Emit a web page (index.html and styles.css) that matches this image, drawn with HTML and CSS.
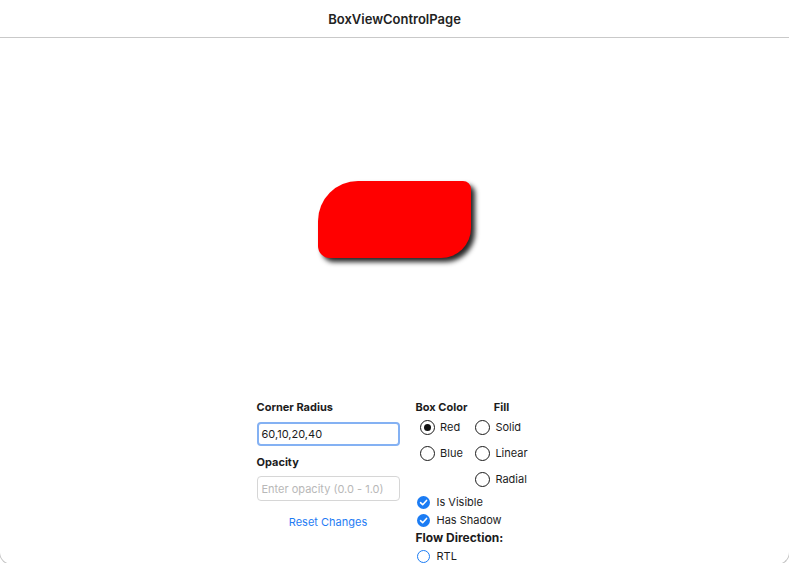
FILE: index.html
```html
<!DOCTYPE html>
<html lang="en">
<head>
<meta charset="utf-8">
<title>BoxViewControlPage</title>
<link rel="stylesheet" href="styles.css">
</head>
<body>
<div class="window">
  <header class="header">BoxViewControlPage</header>
  <main class="stage">
    <div class="box"></div>
  </main>
  <section class="controls">
    <div class="col-left">
      <div class="label">Corner Radius</div>
      <div class="entry focused">60,10,20,40</div>
      <div class="label label-gap">Opacity</div>
      <div class="entry placeholder">Enter opacity (0.0 - 1.0)</div>
      <div class="link">Reset Changes</div>
    </div>
    <div class="col-right">
      <div class="groups">
        <div class="group group-color">
          <div class="label">Box Color</div>
          <div class="radios">
            <div class="radio-row"><span class="radio checked"></span><span>Red</span></div>
            <div class="radio-row"><span class="radio"></span><span>Blue</span></div>
          </div>
        </div>
        <div class="group">
          <div class="label">Fill</div>
          <div class="radios">
            <div class="radio-row"><span class="radio"></span><span>Solid</span></div>
            <div class="radio-row"><span class="radio"></span><span>Linear</span></div>
            <div class="radio-row"><span class="radio"></span><span>Radial</span></div>
          </div>
        </div>
      </div>
      <div class="check-row">
        <span class="check"><svg viewBox="0 0 14 14" width="14" height="14"><path d="M3.8 7.2 L6.1 9.4 L10.3 4.8" fill="none" stroke="#fff" stroke-width="1.7" stroke-linecap="round" stroke-linejoin="round"/></svg></span>
        <span>Is Visible</span>
      </div>
      <div class="check-row">
        <span class="check"><svg viewBox="0 0 14 14" width="14" height="14"><path d="M3.8 7.2 L6.1 9.4 L10.3 4.8" fill="none" stroke="#fff" stroke-width="1.7" stroke-linecap="round" stroke-linejoin="round"/></svg></span>
        <span>Has Shadow</span>
      </div>
      <div class="section-title">Flow Direction:</div>
      <div class="check-row">
        <span class="radio-blue"></span>
        <span>RTL</span>
      </div>
    </div>
  </section>
</div>
</body>
</html>
```

FILE: styles.css
```css
html, body {
  margin: 0;
  padding: 0;
  background: #ffffff;
  overflow: hidden;
}

body {
  font-family: Inter, "Liberation Sans", Arial, sans-serif;
  color: #1c1c1c;
  width: 789px;
  height: 563px;
}

.window {
  box-sizing: border-box;
  width: 791px;
  height: 565px;
  margin-left: -1px;
  border: 1px solid #c4c4c4;
  border-top: none;
  border-radius: 0 0 13px 13px;
  overflow: hidden;
  background: #fff;
}

.header {
  height: 37px;
  border-bottom: 1px solid #c9c9c9;
  display: flex;
  align-items: center;
  justify-content: center;
  font-size: 13px;
  font-weight: 600;
  color: #222;
}

.stage {
  height: 362px;
  display: flex;
  align-items: center;
  justify-content: center;
}

.box {
  width: 153px;
  height: 77px;
  background: #ff0000;
  border-radius: 40px 8px 30px 12px;
  box-shadow: 4px 4px 5px rgba(0, 0, 0, 0.85);
}

.controls {
  display: flex;
  justify-content: center;
  gap: 16px;
  padding-right: 3px;
}

.col-left {
  width: 143px;
  display: flex;
  flex-direction: column;
}

.label {
  font-size: 11px;
  font-weight: 700;
  line-height: 14px;
  height: 14px;
  white-space: nowrap;
}

.label-gap {
  margin-top: 9px;
}

.entry {
  box-sizing: border-box;
  height: 24px;
  margin-top: 8px;
  border: 1px solid #d6d6d6;
  border-radius: 4px;
  font-size: 11px;
  display: flex;
  align-items: center;
  padding-left: 4px;
  white-space: nowrap;
}

.entry.focused {
  border: 2px solid #84b1f3;
  padding-left: 3px;
  color: #1c1c1c;
}

.entry.placeholder {
  margin-top: 7px;
  height: 25px;
  color: #b8b8b8;
}

.link {
  margin-top: 14px;
  text-align: center;
  font-size: 11px;
  line-height: 14px;
  color: #1f7cf4;
}

.col-right {
  display: flex;
  flex-direction: column;
  width: 114px;
}

.groups {
  display: flex;
  gap: 8px;
  height: 93px;
}

.group {
  display: flex;
  flex-direction: column;
  align-items: center;
}

.radios {
  display: flex;
  flex-direction: column;
}

.radio-row {
  height: 26px;
  display: flex;
  align-items: center;
  gap: 5px;
  font-size: 11px;
}

.radio {
  box-sizing: border-box;
  width: 15px;
  height: 15px;
  border: 1.5px solid #1a1a1a;
  border-radius: 50%;
  display: inline-flex;
  align-items: center;
  justify-content: center;
  flex: none;
}

.radio.checked::after {
  content: "";
  width: 7px;
  height: 7px;
  border-radius: 50%;
  background: #111;
}

.check-row {
  height: 18px;
  display: flex;
  align-items: center;
  gap: 7px;
  font-size: 11px;
  padding-left: 1px;
}

.check {
  width: 13px;
  height: 13px;
  border-radius: 50%;
  background: #1b7cf4;
  display: inline-flex;
  align-items: center;
  justify-content: center;
  flex: none;
}

.check svg {
  width: 13px;
  height: 13px;
}

.radio-blue {
  box-sizing: border-box;
  width: 13px;
  height: 13px;
  border-radius: 50%;
  border: 1.5px solid #1b7cf4;
  flex: none;
}

.section-title {
  height: 18px;
  line-height: 18px;
  font-size: 12px;
  font-weight: 700;
}
```
